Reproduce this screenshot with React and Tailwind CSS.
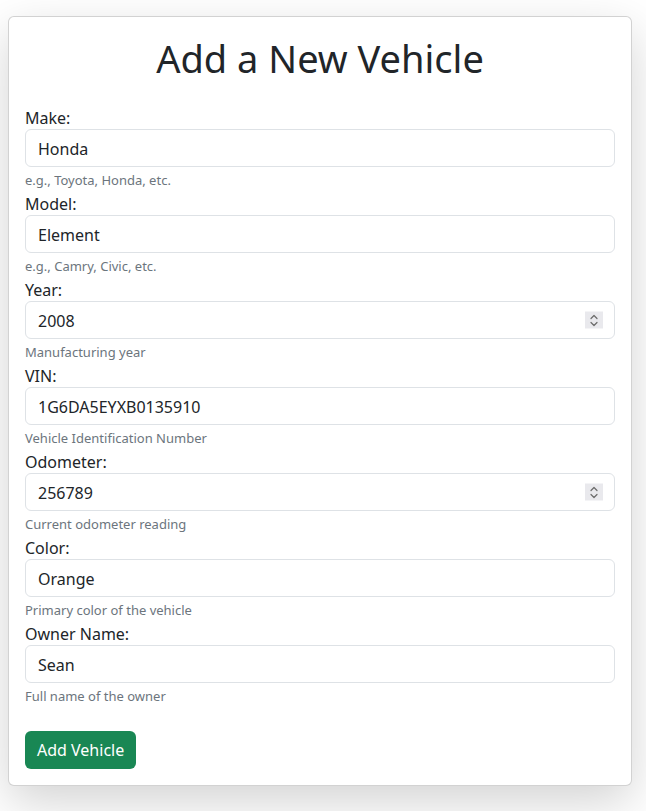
const fields = [
  { label: 'Make:', value: 'Honda', help: 'e.g., Toyota, Honda, etc.' },
  { label: 'Model:', value: 'Element', help: 'e.g., Camry, Civic, etc.' },
  { label: 'Year:', value: '2008', help: 'Manufacturing year', number: true },
  { label: 'VIN:', value: '1G6DA5EYXB0135910', help: 'Vehicle Identification Number' },
  { label: 'Odometer:', value: '256789', help: 'Current odometer reading', number: true },
  { label: 'Color:', value: 'Orange', help: 'Primary color of the vehicle' },
  { label: 'Owner Name:', value: 'Sean', help: 'Full name of the owner' },
]

function Spinner() {
  return (
    <span className="absolute right-[12px] top-1/2 -translate-y-1/2 flex h-[17px] w-[18px] flex-col items-center justify-center bg-[#e9e9ed]">
      <svg width="10" height="14" viewBox="0 0 10 14" fill="none" stroke="#6b6b6b" strokeWidth="1.2" strokeLinecap="round" strokeLinejoin="round">
        <path d="M2 5 L5 2 L8 5" />
        <path d="M2 9 L5 12 L8 9" />
      </svg>
    </span>
  )
}

export default function App() {
  return (
    <div className="min-h-screen bg-white pt-4 pl-2 pr-[14px] pb-6 text-[#212529] font-['Segoe_UI','Noto_Sans',sans-serif] text-base leading-6">
      <div className="rounded-md border border-black/[0.175] bg-white p-4 shadow-[0_1rem_3rem_rgba(0,0,0,0.175)]">
        <h1 className="mb-6 pt-[2px] h-[48px] text-center text-[38px] leading-[46px] font-normal">Add a New Vehicle</h1>
        <form onSubmit={(e) => e.preventDefault()}>
          {fields.map((f) => (
            <div key={f.label}>
              <label className="block h-6 leading-[27px]">{f.label}</label>
              <div className="relative">
                <input
                  type="text"
                  defaultValue={f.value}
                  className="block h-[38px] w-full rounded-md border border-[#dee2e6] bg-white px-3 pt-[2px] text-base text-[#212529] outline-none"
                />
                {f.number && <Spinner />}
              </div>
              <div className="h-6 text-[13px] leading-[27px] text-[#6c757d]">{f.help}</div>
            </div>
          ))}
          <button type="submit" className="mt-6 h-[38px] rounded-md bg-[#198754] px-3 text-base text-white">
            Add Vehicle
          </button>
        </form>
      </div>
    </div>
  )
}
